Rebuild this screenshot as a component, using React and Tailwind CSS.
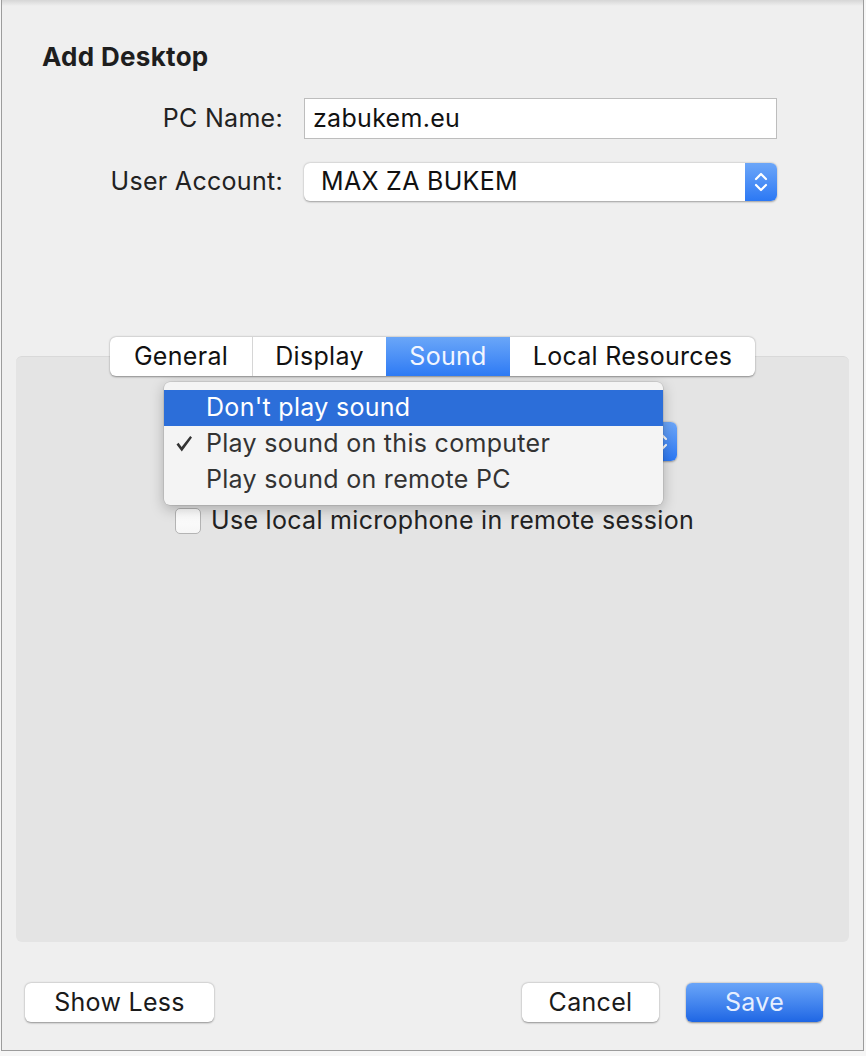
import React from "react";

const font = { fontFamily: "Inter, 'Liberation Sans', sans-serif" };

function Stepper({ className = "" }) {
  return (
    <div className={`flex items-center justify-center bg-gradient-to-b from-[#6ca6f8] to-[#2b78f4] ${className}`}>
      <svg width="14" height="24" viewBox="0 0 14 24" fill="none" stroke="white" strokeWidth="2.2" strokeLinecap="round" strokeLinejoin="round">
        <path d="M2 9 L7 4 L12 9" />
        <path d="M2 15 L7 20 L12 15" />
      </svg>
    </div>
  );
}

export default function App() {
  return (
    <div className="w-[866px] h-[1056px] bg-[#f6f6f6] pl-px tracking-[0.3px]" style={font}>
      <div className="relative w-[863px] h-[1051px] bg-[#efefef] border-x border-b border-[#9c9c9c] flex flex-col">
        <div className="absolute left-0 right-0 top-0 h-[6px] bg-gradient-to-b from-[#d6d6d6] to-[#efefef]" />
        <div className="pt-[42px] pl-[40px] text-[26px] leading-[30px] font-bold text-[#1e1e1e]">Add Desktop</div>

        <div className="mt-[26px] grid grid-cols-[281px_473px] gap-x-[21px] gap-y-[24px] items-center text-[25px] text-[#222]">
          <div className="text-right">PC Name:</div>
          <div className="h-[41px] bg-white border border-[#bdbdbd] flex items-center px-[8px] text-[#111]">zabukem.eu</div>
          <div className="text-right">User Account:</div>
          <div className="h-[38px] bg-white rounded-[6px] shadow-[0_0.5px_2px_rgba(0,0,0,0.35)] flex items-center overflow-hidden">
            <div className="flex-1 pl-[17px] text-[#111]">MAX ZA BUKEM</div>
            <Stepper className="w-[32px] h-full" />
          </div>
        </div>

        <div className="mt-[136px] flex justify-center relative z-10">
          <div className="flex h-[39px] bg-white rounded-[6px] shadow-[0_0.5px_2px_rgba(0,0,0,0.4)] overflow-hidden text-[25px] text-[#111]">
            <div className="w-[143px] flex items-center justify-center border-r border-[#d6d6d6]">General</div>
            <div className="w-[133px] flex items-center justify-center">Display</div>
            <div className="w-[124px] flex items-center justify-center bg-gradient-to-b from-[#6aa6f8] to-[#2d7af4] text-[#f2f6ff]">Sound</div>
            <div className="w-[245px] flex items-center justify-center">Local Resources</div>
          </div>
        </div>

        <div className="relative mx-[14px] -mt-[20px] h-[586px] bg-[#e4e4e4] rounded-[6px] border-t border-[#d9d9d9]">
          <div className="ml-[174px] mt-[65px] w-[487px] h-[39px] bg-white rounded-[6px] shadow-[0_0.5px_2px_rgba(0,0,0,0.35)] flex overflow-hidden">
            <div className="flex-1" />
            <Stepper className="w-[32px] h-full" />
          </div>
          <div className="mt-[41px] ml-[159px] flex items-center gap-[10px] text-[25px] text-[#222]">
            <div className="w-[26px] h-[26px] rounded-[5px] bg-gradient-to-b from-white to-[#f6f6f6] border border-[#b4b4b4]" />
            <span>Use local microphone in remote session</span>
          </div>

          <div className="absolute left-[148px] top-[25px] w-[499px] h-[123px] bg-[#f4f4f4] rounded-[6px] shadow-[0_4px_14px_rgba(0,0,0,0.25),0_0_0_0.5px_rgba(0,0,0,0.15)] pt-[8px] text-[25px] text-[#333]">
            <div className="h-[36px] bg-[#2c6ed9] text-white flex items-center pl-[42px]">Don't play sound</div>
            <div className="h-[36px] flex items-center relative pl-[42px]">
              <svg className="absolute left-[11px] top-[9px]" width="18" height="18" viewBox="0 0 18 18">
                <path d="M1.5 9.5 L3.5 7.8 L6.6 12 L15.2 1 L17 2.4 L6.8 16.5 Z" fill="#333" />
              </svg>
              Play sound on this computer
            </div>
            <div className="h-[36px] flex items-center pl-[42px]">Play sound on remote PC</div>
          </div>
        </div>

        <div className="mt-[41px] flex items-center pl-[23px] pr-[40px] text-[25px]">
          <div className="w-[189px] h-[39px] bg-white rounded-[6px] shadow-[0_0.5px_2px_rgba(0,0,0,0.4)] flex items-center justify-center text-[#1a1a1a]">Show Less</div>
          <div className="flex-1" />
          <div className="w-[137px] h-[39px] bg-white rounded-[6px] shadow-[0_0.5px_2px_rgba(0,0,0,0.4)] flex items-center justify-center text-[#1a1a1a]">Cancel</div>
          <div className="ml-[27px] w-[137px] h-[39px] rounded-[6px] bg-gradient-to-b from-[#6aa5f8] to-[#1e66e4] shadow-[0_0.5px_2px_rgba(0,0,0,0.4)] flex items-center justify-center text-[#e6efff]">Save</div>
        </div>
      </div>
    </div>
  );
}
